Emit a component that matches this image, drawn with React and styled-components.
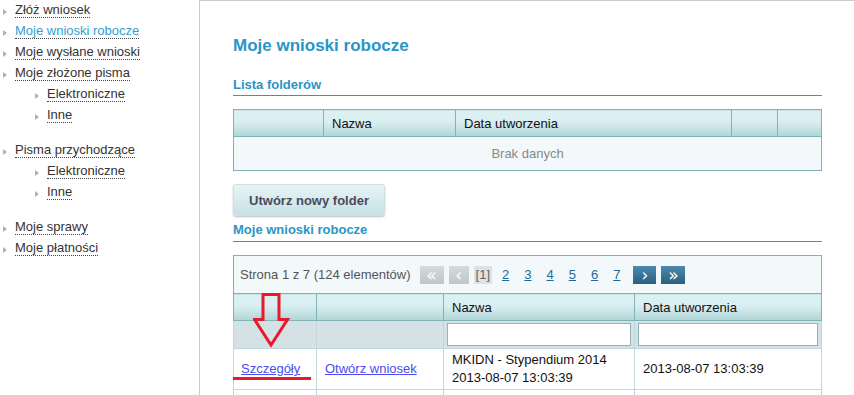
import styled, { createGlobalStyle } from 'styled-components';

const GlobalStyle = createGlobalStyle`
  html, body {
    margin: 0;
    overflow: hidden;
    background: #fff;
  }
  body {
    font-family: "Liberation Sans", Arial, sans-serif;
    font-size: 13px;
    color: #333;
  }
`;

const Page = styled.div`
  display: flex;
  height: 395px;
`;

const Sidebar = styled.nav`
  width: 199px;
  flex-shrink: 0;
`;

const NavList = styled.ul`
  list-style: none;
  margin: 0;
  padding: 0;
`;

const NavItem = styled.li`
  display: flex;
  align-items: center;
  gap: 8px;
  height: 21px;
  padding-left: ${(p) => (p.$sub ? 35 : 3)}px;
  margin-top: ${(p) => (p.$gap ? 14 : 0)}px;
`;

const Bullet = styled.span`
  width: 0;
  height: 0;
  border-left: 4px solid #a9b3ba;
  border-top: 3px solid transparent;
  border-bottom: 3px solid transparent;
  margin-top: 2px;
`;

const NavLink = styled.a`
  color: ${(p) => (p.$active ? '#35a0d0' : '#333')};
  text-decoration: none;
  border-bottom: 1px dotted #444;
  line-height: 14px;
  cursor: pointer;
`;

const Main = styled.main`
  flex: 1;
  border-left: 1px solid #ccc;
  border-top: 1px solid #ccc;
  padding: 35px 33px 0 33px;
`;

const Title = styled.h1`
  margin: 0;
  font-size: 17px;
  line-height: 20px;
  font-weight: bold;
  color: #2a95c5;
`;

const SectionTitle = styled.h2`
  margin: ${(p) => p.$top}px 0 0;
  padding-bottom: ${(p) => p.$pad}px;
  font-size: 13px;
  line-height: 16px;
  font-weight: bold;
  color: #2a95c5;
  border-bottom: 1px solid #2a9bc9;
`;

const Grid = styled.table`
  width: 100%;
  margin-top: 13px;
  border-collapse: collapse;
  table-layout: fixed;
  border: 1px solid #80b2b7;
`;

const HeadCell = styled.th`
  height: 26px;
  padding: 0 8px;
  text-align: left;
  font-weight: normal;
  color: #111;
  border: 1px solid #80b2b7;
  background: linear-gradient(#def1f3 0%, #d8eef0 45%, #b0d5d9 100%);
`;

const EmptyCell = styled.td`
  height: 31px;
  text-align: center;
  color: #888;
  background: #f3f8fa;
`;

const NewFolderButton = styled.button`
  display: block;
  margin-top: 13px;
  width: 152px;
  height: 32px;
  border: 1px solid #cfe0e3;
  border-radius: 3px;
  background: linear-gradient(#e8f4f6, #c7e1e5);
  box-shadow: 0 1px 2px rgba(0, 0, 0, 0.25);
  font-family: inherit;
  font-size: 13px;
  font-weight: bold;
  color: #4a4a5e;
`;

const DraftBox = styled.div`
  position: relative;
`;

const PagerCell = styled.td`
  height: 37px;
  padding: 0 0 0 6px;
  background: #f3f8fa;
  border: 1px solid #80b2b7;
`;

const Pager = styled.div`
  display: flex;
  align-items: center;
  gap: 5px;
  color: #555;
`;

const PagerInfo = styled.span`
  margin-right: 4px;
`;

const PagerArrow = styled.span`
  display: inline-flex;
  align-items: center;
  justify-content: center;
  width: ${(p) => p.$w}px;
  height: 18px;
  margin-left: ${(p) => p.$ml || 0}px;
  color: #fff;
  font-family: "DejaVu Sans", sans-serif;
  font-size: 17px;
  line-height: 18px;
  background: ${(p) =>
    p.$on
      ? 'linear-gradient(#4b8aad, #2b5f7e)'
      : 'linear-gradient(#d3dbdb, #bcc8c8)'};
`;

const CurrentPage = styled.span`
  display: inline-flex;
  align-items: center;
  height: 18px;
  padding: 0 2px;
  background: #dde2e4;
  color: #666;
`;

const PageNum = styled.a`
  padding: 0 5px;
  color: #1f6b96;
  text-decoration: underline;
`;

const FilterCell = styled.td`
  height: 27px;
  padding: 0 3px;
  background: #d4e2e5;
  border: 1px solid #c3d7da;
`;

const FilterInput = styled.input`
  display: block;
  box-sizing: border-box;
  width: 100%;
  height: 23px;
  border: 1px solid #8fb4b9;
  background: #fff;
`;

const DataCell = styled.td`
  height: 36px;
  padding: 2px 8px 2px ${(p) => p.$pl || 8}px;
  color: #111;
  line-height: 18px;
  border: 1px solid #c3d7da;
  background: #fff;
`;

const RowLink = styled.a`
  color: #4c4cf0;
  text-decoration: underline;
`;

const MarkArrow = styled.svg`
  position: absolute;
  left: 20px;
  top: 38px;
`;

const MarkLine = styled.span`
  position: absolute;
  left: 0;
  top: 122px;
  width: 78px;
  height: 3px;
  background: #e8192c;
`;

const nav = [
  { label: 'Złóż wniosek' },
  { label: 'Moje wnioski robocze', active: true },
  { label: 'Moje wysłane wnioski' },
  { label: 'Moje złożone pisma' },
  { label: 'Elektroniczne', sub: true },
  { label: 'Inne', sub: true },
  { label: 'Pisma przychodzące', gap: true },
  { label: 'Elektroniczne', sub: true },
  { label: 'Inne', sub: true },
  { label: 'Moje sprawy', gap: true },
  { label: 'Moje płatności' },
];

export default function App() {
  return (
    <>
      <GlobalStyle />
      <Page>
        <Sidebar>
          <NavList>
            {nav.map((item, i) => (
              <NavItem key={i} $sub={item.sub} $gap={item.gap}>
                <Bullet />
                <NavLink $active={item.active}>{item.label}</NavLink>
              </NavItem>
            ))}
          </NavList>
        </Sidebar>
        <Main>
          <Title>Moje wnioski robocze</Title>
          <SectionTitle $top={21} $pad={2}>Lista folderów</SectionTitle>
          <Grid>
            <colgroup>
              <col style={{ width: 90 }} />
              <col style={{ width: 132 }} />
              <col style={{ width: 276 }} />
              <col style={{ width: 46 }} />
              <col style={{ width: 44 }} />
            </colgroup>
            <thead>
              <tr>
                <HeadCell />
                <HeadCell>Nazwa</HeadCell>
                <HeadCell>Data utworzenia</HeadCell>
                <HeadCell />
                <HeadCell />
              </tr>
            </thead>
            <tbody>
              <tr>
                <EmptyCell colSpan={5}>Brak danych</EmptyCell>
              </tr>
            </tbody>
          </Grid>
          <NewFolderButton type="button">Utwórz nowy folder</NewFolderButton>
          <SectionTitle $top={6} $pad={3}>Moje wnioski robocze</SectionTitle>
          <DraftBox>
            <Grid>
              <colgroup>
                <col style={{ width: 83 }} />
                <col style={{ width: 127 }} />
                <col style={{ width: 191 }} />
                <col style={{ width: 187 }} />
              </colgroup>
              <thead>
                <tr>
                  <PagerCell colSpan={4}>
                    <Pager>
                      <PagerInfo>Strona 1 z 7 (124 elementów)</PagerInfo>
                      <PagerArrow $w={24}>«</PagerArrow>
                      <PagerArrow $w={20}>‹</PagerArrow>
                      <CurrentPage>[1]</CurrentPage>
                      {[2, 3, 4, 5, 6, 7].map((n) => (
                        <PageNum key={n}>{n}</PageNum>
                      ))}
                      <PagerArrow $w={23} $ml={3} $on>›</PagerArrow>
                      <PagerArrow $w={24} $on>»</PagerArrow>
                    </Pager>
                  </PagerCell>
                </tr>
                <tr>
                  <HeadCell />
                  <HeadCell />
                  <HeadCell>Nazwa</HeadCell>
                  <HeadCell>Data utworzenia</HeadCell>
                </tr>
                <tr>
                  <FilterCell />
                  <FilterCell />
                  <FilterCell>
                    <FilterInput type="text" />
                  </FilterCell>
                  <FilterCell>
                    <FilterInput type="text" />
                  </FilterCell>
                </tr>
              </thead>
              <tbody>
                <tr>
                  <DataCell $pl={7}>
                    <RowLink>Szczegóły</RowLink>
                  </DataCell>
                  <DataCell>
                    <RowLink>Otwórz wniosek</RowLink>
                  </DataCell>
                  <DataCell>
                    MKIDN - Stypendium 2014
                    <br />
                    2013-08-07 13:03:39
                  </DataCell>
                  <DataCell>2013-08-07 13:03:39</DataCell>
                </tr>
                <tr>
                  <DataCell />
                  <DataCell />
                  <DataCell />
                  <DataCell />
                </tr>
              </tbody>
            </Grid>
            <MarkArrow width="37" height="55" viewBox="0 0 37 55">
              <polygon
                points="10,1.5 26,1.5 26,26.5 34.5,26.5 18,52 1.5,26.5 10,26.5"
                fill="none"
                stroke="#e8192c"
                strokeWidth="3"
              />
            </MarkArrow>
            <MarkLine />
          </DraftBox>
        </Main>
      </Page>
    </>
  );
}
